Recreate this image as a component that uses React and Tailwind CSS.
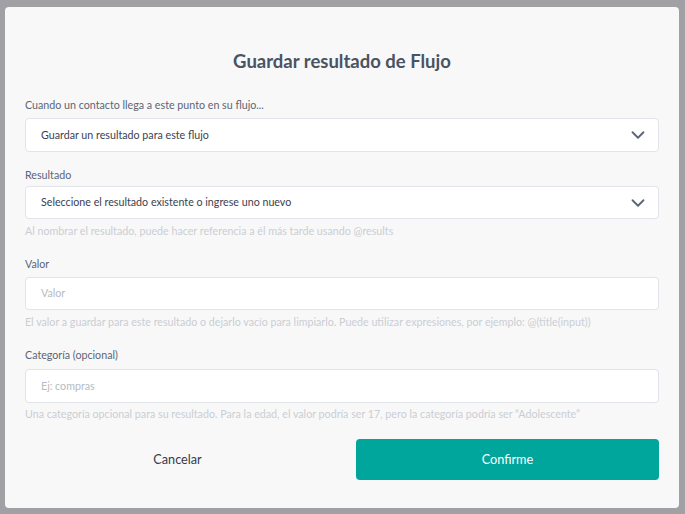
import { ChevronDown } from "lucide-react";

const fields = [
  {
    label: "Cuando un contacto llega a este punto en su flujo...",
    value: "Guardar un resultado para este flujo",
    select: true,
    gap: "mt-[25px]",
    inGap: "mt-[6px]",
    h: "h-[34px]",
  },
  {
    label: "Resultado",
    value: "Seleccione el resultado existente o ingrese uno nuevo",
    select: true,
    help: "Al nombrar el resultado, puede hacer referencia a él más tarde usando @results",
    gap: "mt-[16px]",
    inGap: "mt-[4px]",
    h: "h-[33px]",
    helpGap: "mt-[5px]",
  },
  {
    label: "Valor",
    placeholder: "Valor",
    help: "El valor a guardar para este resultado o dejarlo vacío para limpiarlo. Puede utilizar expresiones, por ejemplo: @(title(input))",
    gap: "mt-[19px]",
    inGap: "mt-[6px]",
    h: "h-[33px]",
    helpGap: "mt-[5px]",
  },
  {
    label: "Categoría (opcional)",
    placeholder: "Ej: compras",
    help: "Una categoría opcional para su resultado. Para la edad, el valor podría ser 17, pero la categoría podría ser “Adolescente”",
    gap: "mt-[19px]",
    inGap: "mt-[7px]",
    h: "h-[34px]",
    helpGap: "mt-[4px]",
  },
];

function Field({ label, value, placeholder, select, help, gap, inGap, h, helpGap }) {
  return (
    <div className={`flex flex-col ${gap}`}>
      <label className="text-[10.7px] leading-[14px] text-[#5b6575]">{label}</label>
      <div
        className={`${inGap} ${h} bg-white border border-[#e1e4ea] rounded-[4px] flex items-center justify-between pl-[15px] pr-[9px]`}
      >
        {value ? (
          <span className="text-[10.7px] text-[#3a4250]">{value}</span>
        ) : (
          <span className="text-[10.7px] text-[#b6bbc3]">{placeholder}</span>
        )}
        {select && <ChevronDown size={22} strokeWidth={2} className="text-[#5c6478]" />}
      </div>
      {help && (
        <p className={`${helpGap} text-[10.7px] leading-[14px] text-[#caced4]`}>{help}</p>
      )}
    </div>
  );
}

export default function App() {
  return (
    <div
      className="w-[685px] h-[514px] bg-[#a1a1a5] pt-[7px] pl-[5px]"
      style={{ fontFamily: "Lato, 'Open Sans', sans-serif" }}
    >
      <div className="w-[674px] h-[501px] bg-[#f8f8f8] rounded-[4px] px-5 pt-[42px] flex flex-col">
        <h1 className="text-[18.5px] leading-6 font-bold text-center text-[#4a5363]">
          Guardar resultado de Flujo
        </h1>

        {fields.map((f) => (
          <Field key={f.label} {...f} />
        ))}

        <div className="mt-[18px] flex gap-[26px]">
          <button className="w-[305px] h-[41px] text-[12.7px] text-[#333c48]">Cancelar</button>
          <button className="flex-1 h-[41px] rounded-[4px] bg-[#00a59c] text-white text-[12.7px]">
            Confirme
          </button>
        </div>
      </div>
    </div>
  );
}
